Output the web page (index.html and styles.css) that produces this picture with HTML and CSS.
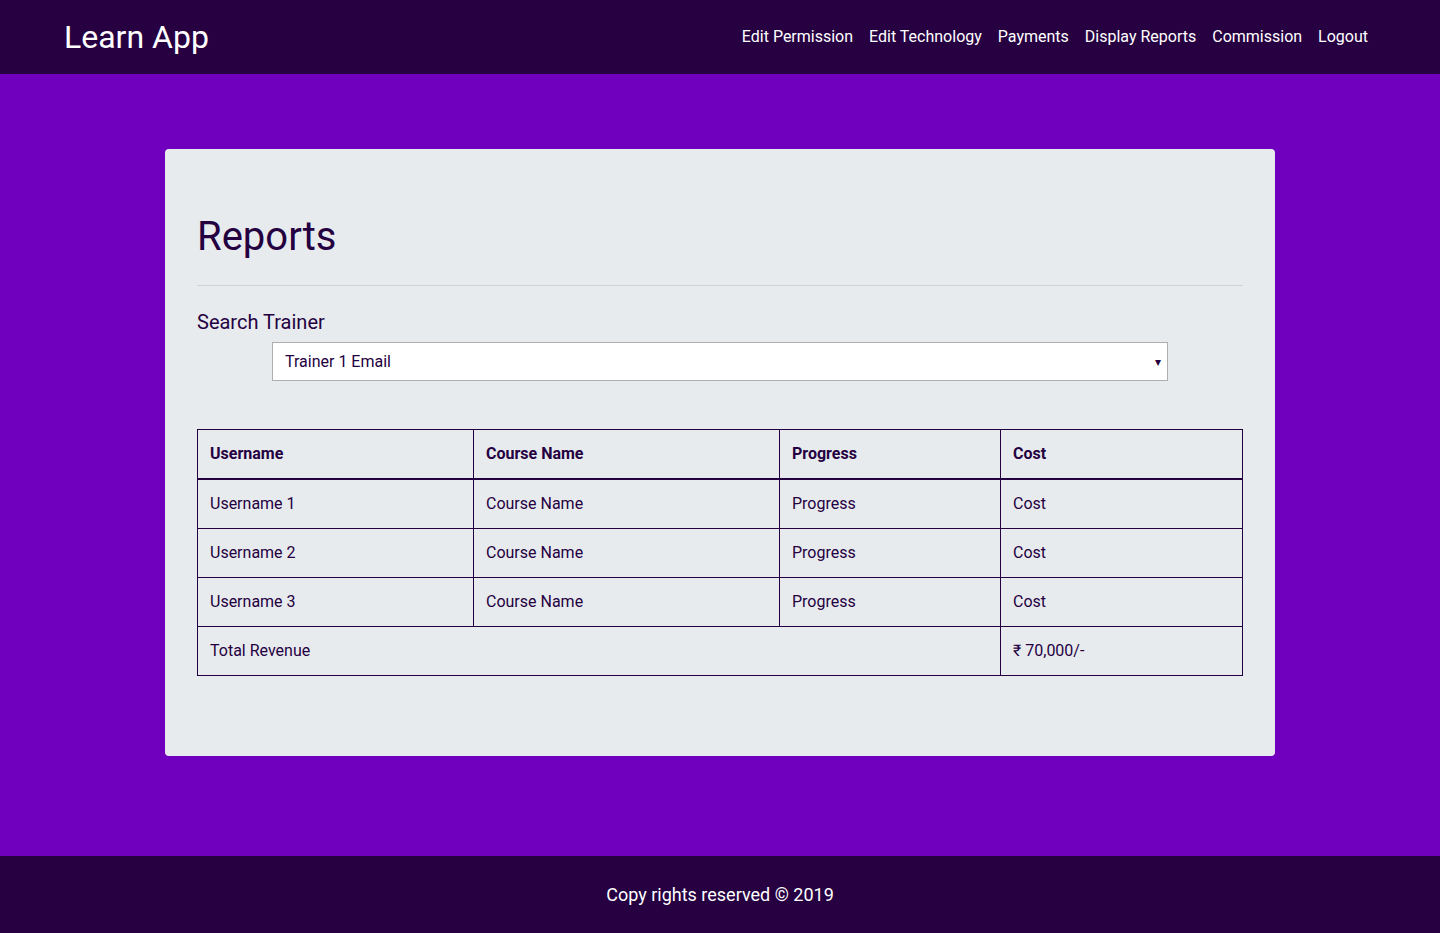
FILE: index.html
```html
<!DOCTYPE html>
<html lang="en">
<head>
<meta charset="utf-8">
<title>Learn App</title>
<link rel="stylesheet" href="styles.css">
</head>
<body>
<div class="page">
  <nav class="navbar">
    <a class="brand" href="#">Learn App</a>
    <ul class="nav-links">
      <li><a href="#">Edit Permission</a></li>
      <li><a href="#">Edit Technology</a></li>
      <li><a href="#">Payments</a></li>
      <li><a href="#">Display Reports</a></li>
      <li><a href="#">Commission</a></li>
      <li><a href="#">Logout</a></li>
    </ul>
  </nav>
  <main class="main">
    <section class="card">
      <h1 class="title">Reports</h1>
      <hr class="divider">
      <label class="label" for="trainer">Search Trainer</label>
      <div class="select-wrap">
        <div class="select" id="trainer">
          <span>Trainer 1 Email</span>
          <span class="caret">&#9662;</span>
        </div>
      </div>
      <table class="report">
        <colgroup>
          <col class="c1"><col class="c2"><col class="c3"><col class="c4">
        </colgroup>
        <thead>
          <tr><th>Username</th><th>Course Name</th><th>Progress</th><th>Cost</th></tr>
        </thead>
        <tbody>
          <tr><td>Username 1</td><td>Course Name</td><td>Progress</td><td>Cost</td></tr>
          <tr><td>Username 2</td><td>Course Name</td><td>Progress</td><td>Cost</td></tr>
          <tr><td>Username 3</td><td>Course Name</td><td>Progress</td><td>Cost</td></tr>
          <tr><td colspan="3">Total Revenue</td><td>&#8377; 70,000/-</td></tr>
        </tbody>
      </table>
    </section>
  </main>
  <footer class="footer">Copy rights reserved &copy; 2019</footer>
</div>
</body>
</html>
```

FILE: styles.css
```css
* { box-sizing: border-box; }
html, body { margin: 0; padding: 0; }
body {
  font-family: Roboto, "Noto Sans", Arial, sans-serif;
  font-size: 16px;
  line-height: 1.5;
  color: #240041;
  background: #7000be;
}
.page {
  min-height: 933px;
  display: flex;
  flex-direction: column;
}
.navbar {
  height: 74px;
  background: #260041;
  display: flex;
  align-items: center;
  justify-content: space-between;
  padding: 0 64px 0 64px;
}
.brand {
  color: #fff;
  text-decoration: none;
  font-size: 32px;
  line-height: 1;
}
.nav-links {
  list-style: none;
  margin: 0;
  padding: 0;
  display: flex;
}
.nav-links a {
  display: block;
  padding: 8px 8px;
  color: #fff;
  text-decoration: none;
  font-size: 16px;
}
.main {
  flex: 1;
  padding: 75px 165px 100px;
}
.card {
  background: #e8ebee;
  border-radius: 4px;
  padding: 64px 32px;
}
.title {
  margin: 0;
  font-size: 40px;
  font-weight: 400;
  line-height: 1.2;
  color: #240041;
}
.divider {
  margin: 24px 0 21px;
  border: 0;
  border-top: 1px solid rgba(0,0,0,0.1);
}
.label {
  display: block;
  font-size: 20px;
  line-height: 30px;
  margin-bottom: 5px;
}
.select-wrap {
  display: flex;
  justify-content: center;
  margin-bottom: 48px;
}
.select {
  width: 896px;
  height: 39px;
  background: #fff;
  border: 1px solid #aeaeae;
  display: flex;
  align-items: center;
  justify-content: space-between;
  padding: 0 6px 0 12px;
  font-size: 16px;
  color: #240041;
}
.caret {
  font-size: 12px;
  line-height: 1;
}
.report {
  width: 100%;
  border-collapse: collapse;
  table-layout: fixed;
  margin-bottom: 16px;
}
.report .c1 { width: 276px; }
.report .c2 { width: 306px; }
.report .c3 { width: 221px; }
.report .c4 { width: auto; }
.report th, .report td {
  border: 1px solid #240041;
  padding: 12px;
  text-align: left;
  vertical-align: top;
  font-size: 16px;
  line-height: 24px;
}
.report th {
  font-weight: 700;
  border-bottom-width: 2px;
}
.report td { font-weight: 400; }
.footer {
  height: 77px;
  background: #260041;
  color: #fff;
  font-size: 18px;
  display: flex;
  align-items: center;
  justify-content: center;
}
```
